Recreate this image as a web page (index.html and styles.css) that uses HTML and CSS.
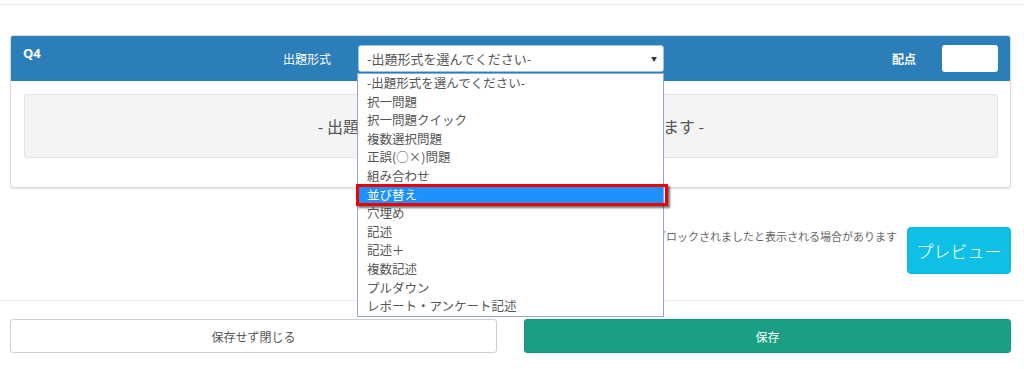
FILE: index.html
```html
<!DOCTYPE html>
<html lang="ja">
<head>
<meta charset="utf-8">
<link rel="stylesheet" href="styles.css">
</head>
<body>
<div class="topline"></div>
<div class="page">
  <div class="card">
    <div class="card-head">
      <div class="qno">Q4</div>
      <div class="label">出題形式</div>
      <div class="select-wrap">
        <div class="select">
          <span>-出題形式を選んでください-</span>
          <span class="arrow">▼</span>
        </div>
        <ul class="dropdown">
          <li>-出題形式を選んでください-</li>
          <li>択一問題</li>
          <li>択一問題クイック</li>
          <li>複数選択問題</li>
          <li>正誤(○×)問題</li>
          <li>組み合わせ</li>
          <li class="active">並び替え</li>
          <li>穴埋め</li>
          <li>記述</li>
          <li>記述＋</li>
          <li>複数記述</li>
          <li>プルダウン</li>
          <li>レポート・アンケート記述</li>
          <div class="mark"></div>
        </ul>
      </div>
      <div class="spacer"></div>
      <div class="label bold">配点</div>
      <div class="score"></div>
    </div>
    <div class="card-body">
      <div class="placeholder">- 出題形式を選択すると問題の入力欄が表示されます -</div>
    </div>
  </div>
  <div class="notice-row">
    <p class="notice">※プレビュー時にポップアップがブロックされましたと表示される場合があります</p>
    <button class="btn-preview">プレビュー</button>
  </div>
</div>
<div class="divider"></div>
<div class="actions">
  <button class="btn btn-close">保存せず閉じる</button>
  <button class="btn btn-save">保存</button>
</div>
</body>
</html>
```

FILE: styles.css
```css
* { box-sizing: border-box; }
body {
  margin: 0;
  background: #fff;
  font-family: "Open Sans", "Noto Sans CJK JP", sans-serif;
  color: #555;
}
.topline {
  height: 5px;
  border-bottom: 1px solid #ececec;
}
.page {
  padding: 0 13px 0 10px;
}
.card {
  margin-top: 30px;
  border: 1px solid #dcdcdc;
  border-radius: 3px;
  box-shadow: 0 1px 2px rgba(0,0,0,0.12);
  background: #fff;
}
.card-head {
  background: #2b7eb8;
  height: 45px;
  display: flex;
  align-items: center;
  padding: 0 12px;
  border-radius: 2px 2px 0 0;
}
.qno {
  width: 260px;
  align-self: flex-start;
  padding-top: 8px;
  color: #fff;
  font-weight: bold;
  font-size: 13px;
  line-height: 18px;
}
.label {
  width: 75px;
  color: #fff;
  font-size: 12px;
  line-height: 16px;
  font-family: "Noto Sans CJK JP", sans-serif;
}
.label.bold { font-weight: bold; width: 50px; }
.select-wrap {
  position: relative;
  width: 306px;
}
.select {
  height: 27px;
  background: #fff;
  border: 1px solid #9ec5e8;
  border-radius: 3px;
  display: flex;
  align-items: center;
  justify-content: space-between;
  padding: 0 6px 0 8px;
  font-family: "Noto Sans CJK JP", sans-serif;
  font-size: 13px;
  color: #555;
}
.arrow {
  font-size: 6px;
  color: #333;
}
.dropdown {
  position: absolute;
  left: -1px;
  top: 28px;
  width: 307px;
  margin: 0;
  padding: 0;
  list-style: none;
  background: #fff;
  border: 1px solid #8fa9cf;
  z-index: 10;
}
.dropdown li {
  height: 18.6px;
  line-height: 18.6px;
  padding-left: 9px;
  font-family: "Noto Sans CJK JP", sans-serif;
  font-size: 12.5px;
  color: #555;
  white-space: nowrap;
}
.dropdown li.active {
  background: #1e90ff;
  color: #fff;
}
.mark {
  position: absolute;
  left: -2px;
  top: 110px;
  width: 312px;
  height: 22px;
  border: 3px solid #ee0000;
  box-shadow: 2px 2px 2px rgba(0,0,0,0.55);
}
.spacer { flex: 1; }
.score {
  width: 56px;
  height: 27px;
  background: #fff;
  border-radius: 3px;
}
.card-body {
  padding: 13px 12px 29px 13px;
}
.placeholder {
  height: 64px;
  background: #f4f4f4;
  border: 1px solid #e4e4e4;
  border-radius: 3px;
  display: flex;
  align-items: center;
  justify-content: center;
  font-family: "Noto Sans CJK JP", sans-serif;
  font-size: 16px;
  color: #555;
}
.notice-row {
  display: flex;
  justify-content: flex-end;
  align-items: flex-start;
  margin-top: 39px;
  gap: 10px;
}
.notice {
  margin: 0;
  padding-top: 1px;
  font-family: "Noto Sans CJK JP", sans-serif;
  font-size: 11px;
  line-height: 16px;
  color: #666;
}
.btn-preview {
  width: 104px;
  height: 47px;
  background: #10bfe6;
  border: 1px solid #0db7dc;
  border-radius: 4px;
  color: #fff;
  font-family: "Noto Sans CJK JP", sans-serif;
  font-size: 17px;
  font-weight: 300;
  padding: 0;
}
.divider {
  margin-top: 26px;
  border-top: 1px solid #e6e6e6;
}
.actions {
  display: flex;
  gap: 27px;
  padding: 18px 13px 0 10px;
}
.btn {
  flex: 1;
  height: 34px;
  border-radius: 3px;
  font-family: "Noto Sans CJK JP", sans-serif;
  font-size: 12px;
  padding: 0;
}
.btn-close {
  background: #fff;
  border: 1px solid #cfcfcf;
  color: #555;
}
.btn-save {
  background: #1a9e84;
  border: 1px solid #18977e;
  color: #fff;
}
```
